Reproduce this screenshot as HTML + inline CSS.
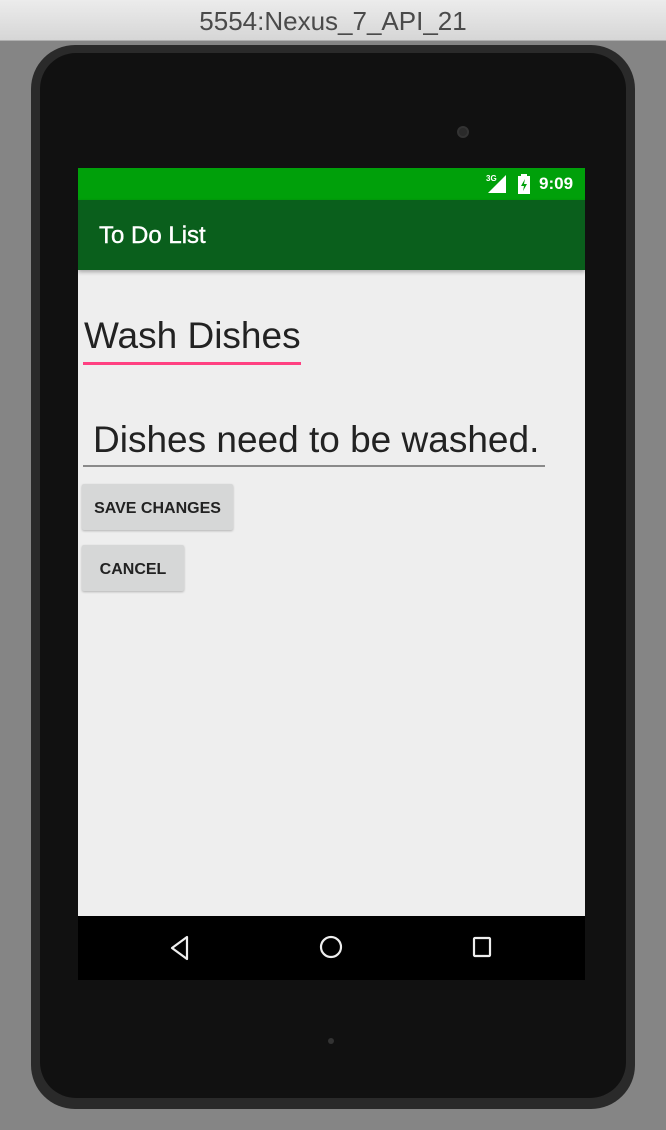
<!DOCTYPE html>
<html><head><meta charset="utf-8"><style>
*{margin:0;padding:0;box-sizing:border-box}
body{width:666px;height:1130px;background:#858585;position:relative;overflow:hidden;font-family:"Liberation Sans",sans-serif}
.title{position:absolute;left:0;top:0;width:666px;height:41px;background:linear-gradient(#ececec,#d6d6d6);border-bottom:1px solid #b0b0b0;text-align:center;font-size:26px;line-height:42px;color:#4a4a4a}
.dev{position:absolute;left:31px;top:45px;width:604px;height:1064px;background:#2a2a2a;border-radius:44px}
.dev2{position:absolute;left:40px;top:53px;width:586px;height:1045px;background:#111;border-radius:36px}
.cam{position:absolute;left:457px;top:126px;width:12px;height:12px;border-radius:50%;background:#2a2a2a;border:2px solid #333}
.scr{position:absolute;left:78px;top:168px;width:507px;height:812px;background:#eeeeee;overflow:hidden}
.sb{position:absolute;left:0;top:0;width:507px;height:32px;background:#00a00a;color:#fff}
.tb{position:absolute;left:0;top:32px;width:507px;height:70px;background:#0a5f1c;box-shadow:0 2px 4px rgba(0,0,0,.3);color:#fff;font-size:24px;line-height:72px;padding-left:21px;-webkit-text-stroke:0.4px #fff}
.nav{position:absolute;left:0;top:748px;width:507px;height:64px;background:#000}
.t1{position:absolute;left:6px;top:147px;font-size:37px;color:#222}
.u1{position:absolute;left:5px;top:194px;width:218px;height:3px;background:#ff4081}
.t2{position:absolute;left:15px;top:251px;font-size:37px;color:#222}
.u2{position:absolute;left:5px;top:297px;width:462px;height:2px;background:#8a8a8a}
.btn{position:absolute;left:4px;background:#d6d7d7;border-radius:2px;box-shadow:0 1px 2px rgba(0,0,0,.25);font-size:16px;font-weight:bold;color:#222;text-align:center;line-height:50px;height:46px}
</style></head><body>
<div class="title">5554:Nexus_7_API_21</div>
<div class="dev"></div><div class="dev2"></div>
<div class="cam"></div>
<div style="position:absolute;left:328px;top:1038px;width:6px;height:6px;border-radius:50%;background:#333"></div>
<div class="scr">
 <div class="sb">
  <span style="position:absolute;left:408px;top:6px;font-size:8px;font-weight:bold">3G</span>
  <svg style="position:absolute;left:410px;top:7px" width="20" height="18"><polygon points="18,0 18,18 0,18" fill="#fff"/></svg>
  <svg style="position:absolute;left:440px;top:6px" width="12" height="20"><rect x="3" y="0" width="6" height="2" fill="#fff"/><rect x="0" y="2" width="12" height="18" fill="#fff"/><path d="M7 5 L3 12 L6 12 L5 17 L9 10 L6 10 Z" fill="#00a00a"/></svg>
  <span style="position:absolute;left:461px;top:6px;font-size:17px;font-weight:bold">9:09</span>
 </div>
 <div class="tb">To Do List</div>
 <div class="t1">Wash Dishes</div><div class="u1"></div>
 <div class="t2">Dishes need to be washed.</div><div class="u2"></div>
 <div class="btn" style="top:316px;width:151px">SAVE CHANGES</div>
 <div class="btn" style="top:377px;width:102px">CANCEL</div>
 <div class="nav">
  <svg style="position:absolute;left:90px;top:18px" width="24" height="28"><polygon points="19,3 19,25 4,14" fill="none" stroke="#eee" stroke-width="2.2" stroke-linejoin="round"/></svg>
  <svg style="position:absolute;left:240px;top:18px" width="26" height="26"><circle cx="13" cy="13" r="10" fill="none" stroke="#eee" stroke-width="2.2"/></svg>
  <svg style="position:absolute;left:393px;top:18px" width="22" height="26"><rect x="3" y="4" width="16" height="18" rx="1" fill="none" stroke="#eee" stroke-width="2.2"/></svg>
 </div>
</div>
</body></html>
